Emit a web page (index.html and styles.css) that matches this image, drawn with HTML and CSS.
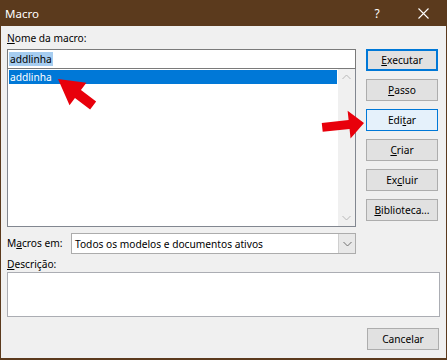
FILE: index.html
```html
<!DOCTYPE html>
<html lang="pt">
<head>
<meta charset="utf-8">
<title>Macro</title>
<link rel="stylesheet" href="styles.css">
</head>
<body>
<div class="window">
  <div class="titlebar">
    <span class="title">Macro</span>
    <div class="controls">
      <span class="ctl help">?</span>
      <span class="ctl close">
        <svg width="11" height="11" viewBox="0 0 11 11"><path d="M0.5 0.5L10.5 10.5M10.5 0.5L0.5 10.5" stroke="#fff" stroke-width="1.1" fill="none"/></svg>
      </span>
    </div>
  </div>
  <div class="content">
    <div class="top">
      <div class="left">
        <div class="lbl"><u>N</u>ome da macro:</div>
        <div class="name-input"><span class="sel">addlinha</span></div>
        <div class="listbox">
          <div class="items">
            <div class="item selected">addlinha</div>
          </div>
          <div class="scrollbar">
            <svg width="9" height="6" viewBox="0 0 9 6"><path d="M0.5 5L4.5 1L8.5 5" stroke="#b8b8b8" stroke-width="1" fill="none"/></svg>
            <svg width="9" height="6" viewBox="0 0 9 6"><path d="M0.5 1L4.5 5L8.5 1" stroke="#b8b8b8" stroke-width="1" fill="none"/></svg>
          </div>
        </div>
      </div>
      <div class="buttons">
        <div class="btn default"><u>E</u>xecutar</div>
        <div class="btn"><u>P</u>asso</div>
        <div class="btn hover">Edi<u>t</u>ar</div>
        <div class="btn"><u>C</u>riar</div>
        <div class="btn">Ex<u>c</u>luir</div>
        <div class="btn"><u>B</u>iblioteca...</div>
      </div>
    </div>
    <div class="macros-row">
      <div class="lbl row-lbl">M<u>a</u>cros em:</div>
      <div class="combo">
        <span class="combo-text">Todos os modelos e documentos ativos</span>
        <span class="combo-btn">
          <svg width="9" height="6" viewBox="0 0 9 6"><path d="M0.5 1L4.5 5L8.5 1" stroke="#707070" stroke-width="1" fill="none"/></svg>
        </span>
      </div>
    </div>
    <div class="lbl desc-lbl"><u>D</u>escrição:</div>
    <div class="textarea"></div>
    <div class="footer">
      <div class="btn">Cancelar</div>
    </div>
  </div>
  <svg class="arrows" width="447" height="360" viewBox="0 0 447 360">
    <polygon fill="#e8000b" transform="translate(58 79) rotate(37)" points="0,0 25,-14 25,-5 44,-5 44,5 25,5 25,14"/>
    <polygon fill="#e8000b" transform="translate(364 123) rotate(174)" points="0,0 15,-14 15,-4.5 42,-4.5 42,4.5 15,4.5 15,14"/>
  </svg>
</div>
</body>
</html>
```

FILE: styles.css
```css
* {
  box-sizing: border-box;
}

html, body {
  margin: 0;
  padding: 0;
  background: #f0f0f0;
}

body {
  font-family: "Noto Sans", "Liberation Sans", sans-serif;
  font-size: 10.2px;
  color: #000;
}

.window {
  position: relative;
  width: 447px;
  height: 360px;
  background: #f0f0f0;
  border: 1px solid #5b3a1d;
  border-top: 0;
  border-bottom-width: 2px;
  display: flex;
  flex-direction: column;
}

.titlebar {
  height: 26px;
  flex: none;
  background: #5b3a1d;
  color: #fff;
  display: flex;
  align-items: center;
  justify-content: space-between;
  padding-left: 4px;
}

.title {
  font-size: 11.5px;
}

.controls {
  display: flex;
  height: 100%;
}

.ctl {
  width: 46px;
  height: 100%;
  display: flex;
  align-items: center;
  justify-content: center;
}

.help {
  font-size: 12px;
}

.content {
  flex: 1;
  display: flex;
  flex-direction: column;
  padding: 0 6px 0 6px;
}

.top {
  display: grid;
  grid-template-columns: 349px 72px;
  column-gap: 10px;
  margin-top: 5px;
}

.left {
  display: flex;
  flex-direction: column;
}

.lbl {
  height: 15px;
  line-height: 15px;
  white-space: nowrap;
}

.name-input {
  margin-top: 3px;
  height: 20px;
  background: #fff;
  border: 1px solid #7a7a7a;
  padding: 2px 1px;
  display: flex;
  align-items: center;
}

.sel {
  background: #a6cdf0;
  line-height: 14px;
  padding: 0 1px;
}

.listbox {
  height: 158px;
  background: #fff;
  border: 1px solid #828790;
  border-top: 0;
  display: flex;
}

.items {
  flex: 1;
  padding: 1px;
}

.item {
  height: 14px;
  line-height: 14px;
  padding-left: 1px;
}

.item.selected {
  background: #0078d7;
  color: #fff;
}

.scrollbar {
  width: 17px;
  background: #f0f0f0;
  display: flex;
  flex-direction: column;
  justify-content: space-between;
  align-items: center;
  padding: 5px 0 5px;
}

.buttons {
  display: flex;
  flex-direction: column;
  gap: 8px;
  padding-top: 18px;
}

.btn {
  width: 72px;
  height: 22px;
  background: #e1e1e1;
  border: 1px solid #adadad;
  display: flex;
  align-items: center;
  justify-content: center;
  white-space: nowrap;
}

.btn.default {
  border: 2px solid #0078d7;
}

.btn.hover {
  background: #e5f1fb;
  border-color: #0078d7;
}

.macros-row {
  display: flex;
  align-items: center;
  margin-top: 6px;
  width: 349px;
}

.row-lbl {
  width: 64px;
  flex: none;
}

.combo {
  flex: 1;
  height: 21px;
  background: #fff;
  border: 1px solid #acacac;
  display: flex;
  align-items: stretch;
}

.combo-text {
  flex: 1;
  padding-left: 3px;
  display: flex;
  align-items: center;
}

.combo-btn {
  width: 17px;
  background: #e8e8e8;
  border-left: 1px solid #cfcfcf;
  display: flex;
  align-items: center;
  justify-content: center;
}

.desc-lbl {
  margin-top: 3px;
}

.textarea {
  height: 45px;
  background: #fff;
  border: 1px solid #abadb3;
}

.footer {
  display: flex;
  justify-content: flex-end;
  margin-top: 11px;
  padding-right: 1px;
}

.arrows {
  position: absolute;
  left: -1px;
  top: 0;
  pointer-events: none;
}
```
